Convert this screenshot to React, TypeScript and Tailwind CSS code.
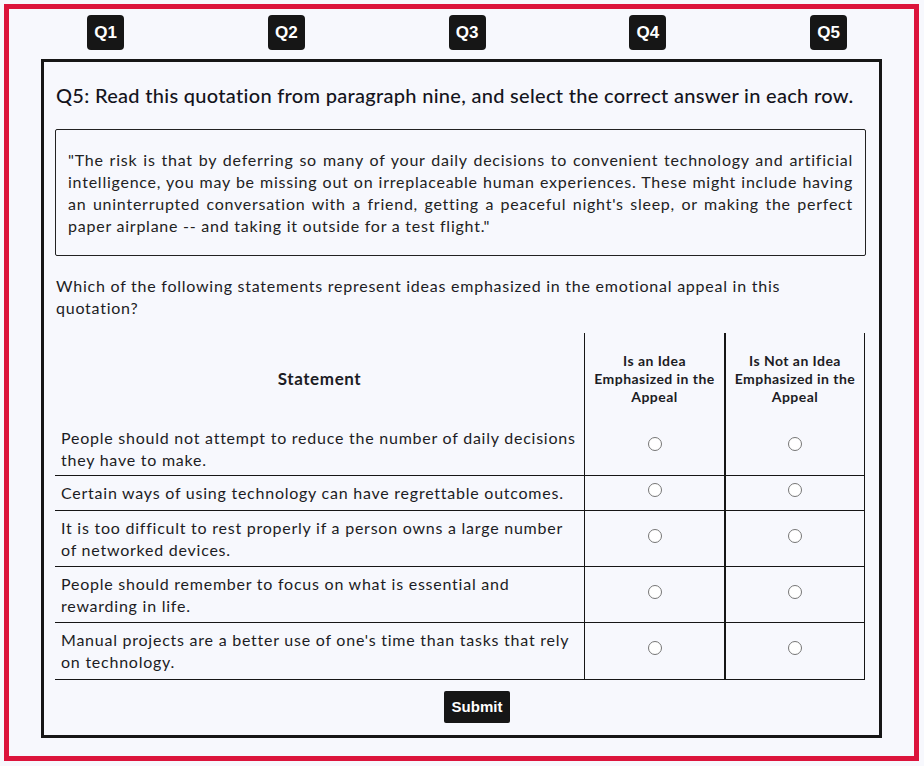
import React from "react";

const rows = [
  { text: "People should not attempt to reduce the number of daily decisions they have to make.", pad: "pt-[8px] pb-[4px]" },
  { text: "Certain ways of using technology can have regrettable outcomes.", pad: "pt-[6px] pb-[6px]" },
  { text: "It is too difficult to rest properly if a person owns a large number of networked devices.", pad: "pt-[6px] pb-[5px]" },
  { text: "People should remember to focus on what is essential and rewarding in life.", pad: "pt-[6px] pb-[5px]" },
  { text: "Manual projects are a better use of one's time than tasks that rely on technology.", pad: "pt-[6px] pb-[6px]" },
];

function Radio() {
  return (
    <span className="block w-[14px] h-[14px] rounded-full border border-[#767676] bg-white relative -top-[3px]" />
  );
}

export default function App() {
  const lato = { fontFamily: "Lato, 'Open Sans', sans-serif" };
  return (
    <div className="w-[924px] h-[766px] bg-[#f7f8fd] p-[4px]" style={lato}>
      <div className="w-[915px] h-[757px] border-[5px] border-[#dc143c] flex flex-col">
        <div className="flex justify-between pl-[78px] pr-[67px] pt-[6px]">
          {["Q1", "Q2", "Q3", "Q4", "Q5"].map((q) => (
            <button
              key={q}
              className="w-[37px] h-[35px] rounded-[4px] bg-[#161616] text-white text-[17px] font-bold flex items-center justify-center"
              style={{ fontFamily: "'Liberation Sans', Arial, sans-serif" }}
            >
              {q}
            </button>
          ))}
        </div>
        <div className="ml-[32px] mt-[9px] w-[841px] h-[679px] border-[3px] border-[#161616] px-[11px] text-[#1c1c24]">
          <h1 className="pt-[19px] text-[20px] leading-[28px] font-medium tracking-[0.3px] text-[#14141c] pl-[1px]">
            Q5: Read this quotation from paragraph nine, and select the correct answer in each row.
          </h1>
          <div className="mt-[20px] w-[811px] border border-[#222] rounded-[2px] px-[12px] pt-[19px] pb-[18px]">
            <p className="text-[16px] leading-[22px] tracking-[0.76px] text-justify text-[#222]">
              "The risk is that by deferring so many of your daily decisions to convenient technology and artificial intelligence, you may be missing out on irreplaceable human experiences. These might include having an uninterrupted conversation with a friend, getting a peaceful night's sleep, or making the perfect paper airplane -- and taking it outside for a test flight."
            </p>
          </div>
          <p className="mt-[19px] text-[16px] leading-[22px] tracking-[0.76px] pl-[1px] pr-[40px]">
            Which of the following statements represent ideas emphasized in the emotional appeal in this quotation?
          </p>
          <div className="mt-[14px] w-[810px]">
            <div className="grid grid-cols-[529px_141px_140px] h-[86px]">
              <div className="flex justify-center pt-[35px] text-[17px] font-bold leading-[22px] tracking-[0.6px]">Statement</div>
              <div className="border-l border-r border-[#161616] pt-[19px] text-center text-[14px] font-bold leading-[18px] tracking-[0.45px]">
                Is an Idea<br />Emphasized in the<br />Appeal
              </div>
              <div className="border-l border-r border-[#161616] pt-[19px] text-center text-[14px] font-bold leading-[18px] tracking-[0.45px]">
                Is Not an Idea<br />Emphasized in the<br />Appeal
              </div>
            </div>
            {rows.map((r, i) => (
              <div key={i} className="grid grid-cols-[529px_141px_140px] border-b border-[#161616]">
                <div className={`px-[6px] ${r.pad} text-[16px] leading-[22px] tracking-[0.76px]`}>{r.text}</div>
                <div className="border-l border-r border-[#161616] flex items-center justify-center">
                  <Radio />
                </div>
                <div className="border-l border-r border-[#161616] flex items-center justify-center">
                  <Radio />
                </div>
              </div>
            ))}
          </div>
          <div className="flex pl-[389px] mt-[11px]">
            <button
              className="w-[66px] h-[32px] rounded-[2px] bg-[#161616] text-white text-[15px] font-bold flex items-center justify-center"
              style={{ fontFamily: "'Liberation Sans', Arial, sans-serif" }}
            >
              Submit
            </button>
          </div>
        </div>
      </div>
    </div>
  );
}
